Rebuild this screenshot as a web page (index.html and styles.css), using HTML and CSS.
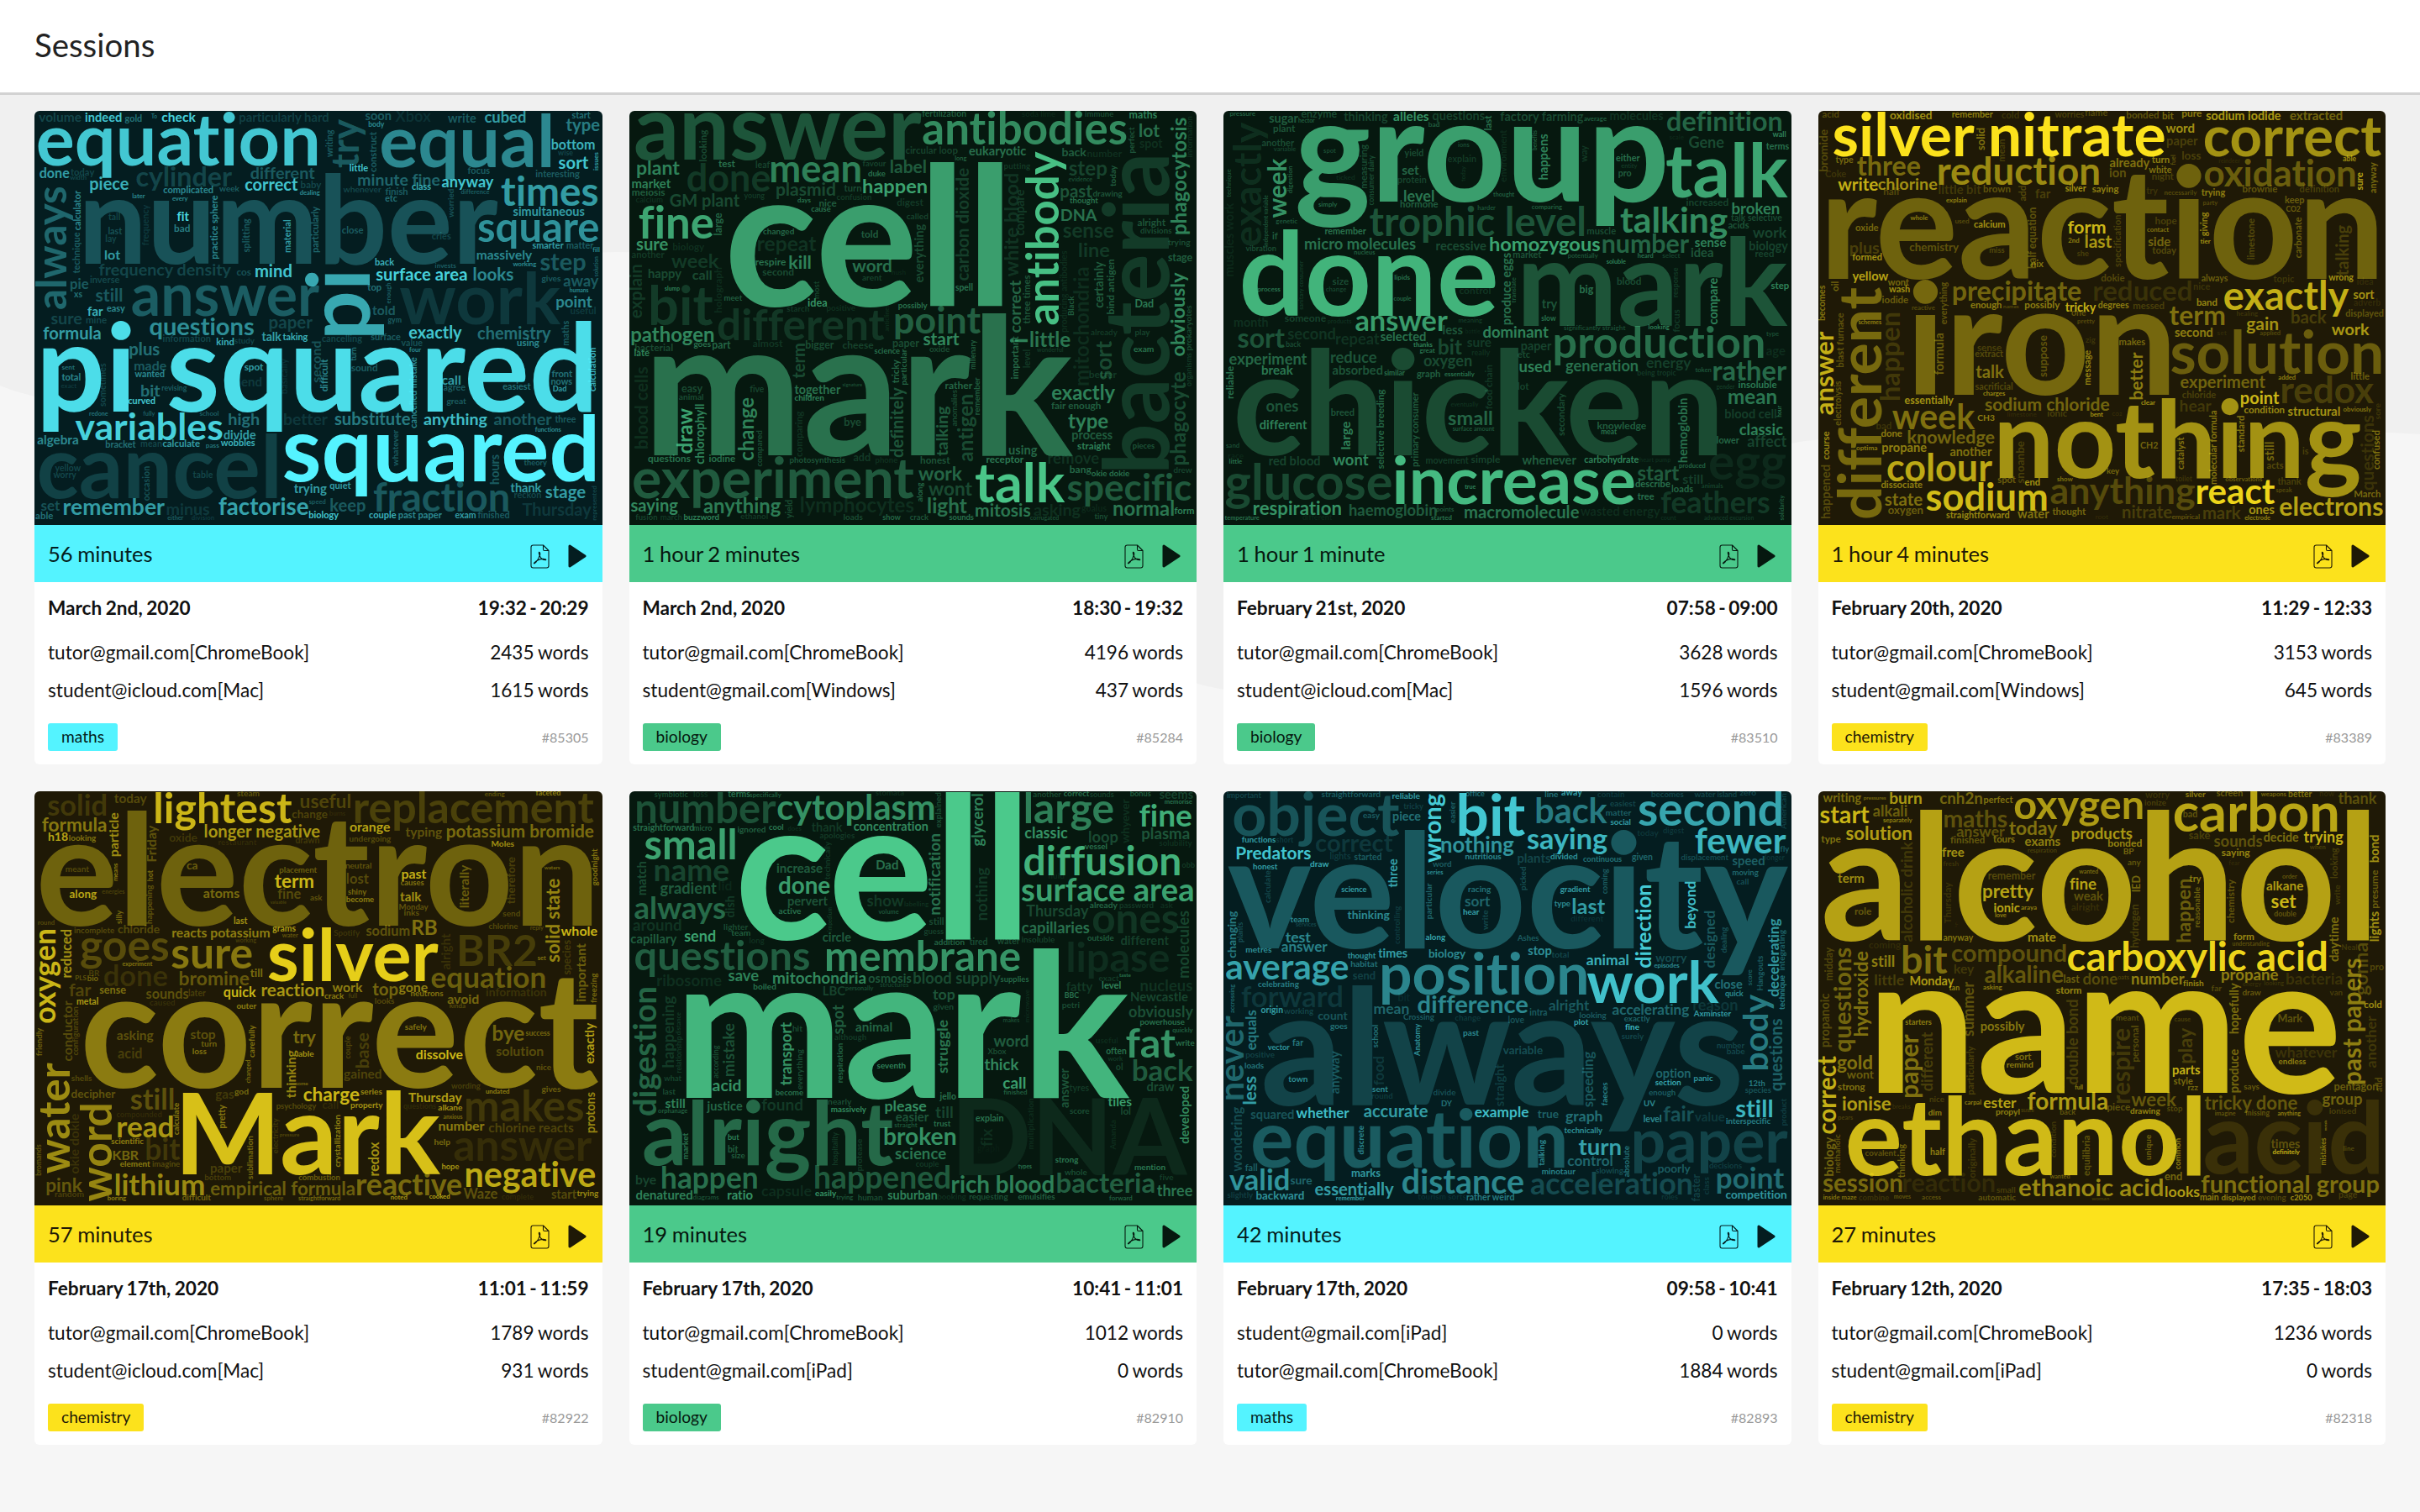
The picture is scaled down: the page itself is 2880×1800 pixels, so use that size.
FILE: index.html
```html
<!DOCTYPE html>
<html lang="en">
<head>
<meta charset="utf-8">
<title>Sessions</title>
<link rel="stylesheet" href="styles.css">
</head>
<body>
<svg width="0" height="0" class="defs" aria-hidden="true">
  <symbol id="pdf" viewBox="0 0 23 29">
    <path d="M3.5 1H15.5L22 7.5V25.5Q22 28 19.5 28H3.5Q1 28 1 25.5V3.5Q1 1 3.5 1ZM15.5 1V6Q15.5 7.5 17 7.5H22M10.6 9.2Q12.4 9.6 11.4 14Q13 18.6 18.6 18.8Q19.6 17.2 14.5 17.4Q8.5 18 4.4 22.4Q4.6 23.8 7 21.2Q10.4 16.6 11.2 13Q9.8 10 10.6 9.2Z" fill="none" stroke="currentColor" stroke-width="1.1" stroke-linejoin="round"/>
  </symbol>
  <symbol id="play" viewBox="0 0 22 28">
    <path d="M2 2L20 14L2 26Z" fill="currentColor" stroke="currentColor" stroke-width="3" stroke-linejoin="round"/>
  </symbol>
</svg>
<header class="topbar"><h1>Sessions</h1></header>
<main class="page">
  <svg class="wave" viewBox="0 0 2880 710" preserveAspectRatio="none" aria-hidden="true"><path d="M0 0H2880V404C2700 395 2480 380 2148 412C1960 440 1850 700 1600 716C1440 722 1380 690 1290 640C1040 460 1000 186 733 187C500 188 420 362 180 372C100 374 40 362 0 346Z"/></svg>
  <section class="grid">
    <article class="card maths">
      <svg class="cloud" data-cloud="85305"></svg>
      <div class="bar"><span>56 minutes</span><svg class="pdf"><use href="#pdf"/></svg><svg class="play"><use href="#play"/></svg></div>
      <div class="info">
        <div class="row when"><span>March 2nd, 2020</span><span>19:32 - 20:29</span></div>
        <div class="row"><span>tutor@gmail.com[ChromeBook]</span><span>2435 words</span></div>
        <div class="row"><span>student@icloud.com[Mac]</span><span>1615 words</span></div>
        <div class="row foot"><span class="tag">maths</span><span class="id">#85305</span></div>
      </div>
    </article>
    <article class="card biology">
      <svg class="cloud" data-cloud="85284"></svg>
      <div class="bar"><span>1 hour 2 minutes</span><svg class="pdf"><use href="#pdf"/></svg><svg class="play"><use href="#play"/></svg></div>
      <div class="info">
        <div class="row when"><span>March 2nd, 2020</span><span>18:30 - 19:32</span></div>
        <div class="row"><span>tutor@gmail.com[ChromeBook]</span><span>4196 words</span></div>
        <div class="row"><span>student@gmail.com[Windows]</span><span>437 words</span></div>
        <div class="row foot"><span class="tag">biology</span><span class="id">#85284</span></div>
      </div>
    </article>
    <article class="card biology">
      <svg class="cloud" data-cloud="83510"></svg>
      <div class="bar"><span>1 hour 1 minute</span><svg class="pdf"><use href="#pdf"/></svg><svg class="play"><use href="#play"/></svg></div>
      <div class="info">
        <div class="row when"><span>February 21st, 2020</span><span>07:58 - 09:00</span></div>
        <div class="row"><span>tutor@gmail.com[ChromeBook]</span><span>3628 words</span></div>
        <div class="row"><span>student@icloud.com[Mac]</span><span>1596 words</span></div>
        <div class="row foot"><span class="tag">biology</span><span class="id">#83510</span></div>
      </div>
    </article>
    <article class="card chemistry">
      <svg class="cloud" data-cloud="83389"></svg>
      <div class="bar"><span>1 hour 4 minutes</span><svg class="pdf"><use href="#pdf"/></svg><svg class="play"><use href="#play"/></svg></div>
      <div class="info">
        <div class="row when"><span>February 20th, 2020</span><span>11:29 - 12:33</span></div>
        <div class="row"><span>tutor@gmail.com[ChromeBook]</span><span>3153 words</span></div>
        <div class="row"><span>student@gmail.com[Windows]</span><span>645 words</span></div>
        <div class="row foot"><span class="tag">chemistry</span><span class="id">#83389</span></div>
      </div>
    </article>
    <article class="card chemistry">
      <svg class="cloud" data-cloud="82922"></svg>
      <div class="bar"><span>57 minutes</span><svg class="pdf"><use href="#pdf"/></svg><svg class="play"><use href="#play"/></svg></div>
      <div class="info">
        <div class="row when"><span>February 17th, 2020</span><span>11:01 - 11:59</span></div>
        <div class="row"><span>tutor@gmail.com[ChromeBook]</span><span>1789 words</span></div>
        <div class="row"><span>student@icloud.com[Mac]</span><span>931 words</span></div>
        <div class="row foot"><span class="tag">chemistry</span><span class="id">#82922</span></div>
      </div>
    </article>
    <article class="card biology">
      <svg class="cloud" data-cloud="82910"></svg>
      <div class="bar"><span>19 minutes</span><svg class="pdf"><use href="#pdf"/></svg><svg class="play"><use href="#play"/></svg></div>
      <div class="info">
        <div class="row when"><span>February 17th, 2020</span><span>10:41 - 11:01</span></div>
        <div class="row"><span>tutor@gmail.com[ChromeBook]</span><span>1012 words</span></div>
        <div class="row"><span>student@gmail.com[iPad]</span><span>0 words</span></div>
        <div class="row foot"><span class="tag">biology</span><span class="id">#82910</span></div>
      </div>
    </article>
    <article class="card maths">
      <svg class="cloud" data-cloud="82893"></svg>
      <div class="bar"><span>42 minutes</span><svg class="pdf"><use href="#pdf"/></svg><svg class="play"><use href="#play"/></svg></div>
      <div class="info">
        <div class="row when"><span>February 17th, 2020</span><span>09:58 - 10:41</span></div>
        <div class="row"><span>student@gmail.com[iPad]</span><span>0 words</span></div>
        <div class="row"><span>tutor@gmail.com[ChromeBook]</span><span>1884 words</span></div>
        <div class="row foot"><span class="tag">maths</span><span class="id">#82893</span></div>
      </div>
    </article>
    <article class="card chemistry">
      <svg class="cloud" data-cloud="82318"></svg>
      <div class="bar"><span>27 minutes</span><svg class="pdf"><use href="#pdf"/></svg><svg class="play"><use href="#play"/></svg></div>
      <div class="info">
        <div class="row when"><span>February 12th, 2020</span><span>17:35 - 18:03</span></div>
        <div class="row"><span>tutor@gmail.com[ChromeBook]</span><span>1236 words</span></div>
        <div class="row"><span>student@gmail.com[iPad]</span><span>0 words</span></div>
        <div class="row foot"><span class="tag">chemistry</span><span class="id">#82318</span></div>
      </div>
    </article>
  </section>
</main>
<script src="clouds.js"></script>
</body>
</html>
```
FILE: styles.css
```css
* { box-sizing: border-box; }
body { margin: 0; min-height: 1800px; background: #f6f6f6; color: #111; font-family: Lato, "Liberation Sans", sans-serif; font-size: 22.6px; font-variant-ligatures: none; }
.defs { position: absolute; }
.topbar { height: 113px; padding: 0 41px; display: flex; align-items: center; background: #fff; border-bottom: 3px solid #d2d2d2; }
.topbar h1 { margin: 0 0 4px; font-size: 38.4px; font-weight: 400; line-height: 46px; color: #222; }
.page { position: relative; padding: 19px 41px 80px; }
.wave { position: absolute; left: 0; top: 0; width: 100%; height: 710px; overflow: visible; }
.wave path { fill: #f0f0f0; }
.grid { position: relative; display: grid; grid-template-columns: repeat(4, 1fr); gap: 32px; }
.card { height: 778px; display: flex; flex-direction: column; border-radius: 6px; background: #fff; overflow: hidden; }
.maths { --tone: #54f3ff; --dark: #041d20; }
.biology { --tone: #4bc98b; --dark: #06180f; }
.chemistry { --tone: #fce21c; --dark: #1f1906; }
.cloud { display: block; flex: none; width: 100%; height: 493px; background: var(--dark); fill: var(--tone); font-family: Lato, "Liberation Sans", sans-serif; font-weight: 700; }
.bar { flex: none; height: 68px; padding: 0 19px 0 16px; display: flex; align-items: center; background: var(--tone); color: var(--dark); font-size: 25.6px; word-spacing: -1px; }
.bar span { flex: 1; }
.bar .pdf { width: 23px; height: 29px; margin: 6px 22px 0 0; }
.bar .play { width: 22px; height: 28px; margin-top: 6px; }
.info { padding: 0 16px; }
.row { height: 45px; display: flex; align-items: center; justify-content: space-between; word-spacing: -1px; }
.when { height: 61px; font-weight: 700; }
.when span:last-child { word-spacing: -2px; }
.foot { height: 67px; }
.tag { height: 33px; line-height: 32px; padding: 0 16px; border-radius: 3px; background: var(--tone); color: var(--dark); font-size: 19.2px; }
.id { font-size: 16px; color: #999; }
```
FILE: clouds.js
```javascript
// One word per line: text, start, end, baseline, strength (0-10).
// A leading ^ marks a word that reads upwards: text, bottom, top, baseline x, strength.
// GRID holds the horizontal and vertical units per pixel.
const GRID = { x: 2.2725, y: 3, top: 20 };
const CLOUDS = {
85305: { left: 12, words: `volume,24,138,60,2
indeed,150,247,60,8
gold,257,302,60,4
To,328,343,47,4
check,357,448,60,8.5
particularly hard,567,808,60,1.7
soon,907,976,52,3
Xbox,988,1084,60,1
write,1130,1206,62,3
cubed,1230,1340,62,6
start,1466,1516,47,4
body,916,958,78,5
equation,22,776,215,8
equal,950,1408,220,5
^try,222,50,888,3
^writing,185,88,818,3
^construct,238,95,936,3
type,1450,1540,93,4.5
bottom,1411,1527,157,7
wise,1428,1468,180,2
sort,1430,1510,228,8
^issues,232,168,1536,6
done,26,106,260,6
today,110,174,250,2
width,108,152,266,2
cylinder,288,546,290,2
different,597,770,263,3
little,865,914,237,8
focus,1184,1243,245,3
interesting,1368,1486,256,3
piece,163,266,302,7
complicated,361,495,315,5
week,512,566,307,3
correct,582,724,306,8
baby,733,788,296,2
dealing,730,784,319,5
whenever,847,950,311,2
minute fine,888,1108,288,3.5
class,1033,1084,301,7
finish,961,1021,321,3
etc,961,993,345,4
anyway,1114,1254,294,8
difference,1166,1242,318,3
times,1275,1535,358,6
simultaneous,1307,1499,394,6
later,277,311,331,5
every,385,427,340,5
^always,728,292,98,3.5
^calculator,446,305,137,5
^technique,600,454,134,3
number,150,1265,565,2.5
tall,212,243,410,2
last,212,249,461,2.5
lay,205,234,487,2
lot,203,244,552,6
^frequency,500,355,320,1.5
fit,398,430,414,9
bad,391,432,453,4.5
^practice sphere,548,322,508,5
^splitting,525,405,593,3
^material,525,410,705,6
^particularly,525,362,780,3.5
close,844,901,458,3
cries,1087,1138,480,2
^worried,400,300,1147,2.5
square,1212,1537,487,5.5
smarter,1359,1443,513,6
matter,1452,1524,513,3
massively,1209,1358,550,5
fill,1522,1540,523,5
step,1380,1502,590,3
frequency density,187,545,609,2
cos,559,597,608,2.5
mind,610,707,615,8
inverse,163,242,634,2
back,934,985,573,7
invests,1096,1152,581,3
working,1306,1369,576,5
surface area,936,1181,627,8.5
looks,1200,1307,625,5
gives,1384,1435,630,3
away,1443,1538,648,3
^solution,612,540,1536,3
answer,276,782,752,3
^pi,820,597,919,6.5
pie,110,158,656,3
xs,119,141,687,4
still,178,249,702,3
far,156,197,752,7
easy,208,257,736,5
sure,57,140,781,2
mine,152,207,778,2
top,913,950,663,4
^enough,708,635,976,3
told,926,986,750,3
gym,968,1004,775,3
work,1000,1435,783,1.3
point,1424,1520,722,5
useful,1462,1530,745,1.5
humans,1460,1510,667,5
formula,36,191,837,6
questions,324,605,820,5.5
information,360,488,845,2
paper,648,764,797,2
talk,627,680,842,6
taking,684,751,840,7
kind,505,551,857,7
study,553,607,850,2
cancelling,790,898,844,2
surface,922,1002,840,3
value,1004,1061,859,2.5
exactly,1025,1168,834,8
chemistry,1211,1409,835,4
using,1318,1377,860,5
^maths,857,770,1458,3
pi squared,36,1519,1095,9
plus,270,350,892,4
four,1026,1057,880,5
^calculation,1021,866,1531,7
^second,990,843,787,2.5
^difficult,1022,907,806,5
^turn,912,865,883,4
sound,869,939,950,3
made,283,368,946,3
wanted,284,363,972,5
sent,86,121,945,4
total,86,136,982,5
exact,84,126,1010,1.5
bit,301,352,1041,4
revising,357,424,1020,3
curved,266,338,1066,8
^sometimes,1075,922,205,2
spot,580,631,948,6
end,572,626,1003,1.5
^basically,1030,905,695,1
call,1114,1164,998,6
agree,1118,1177,1018,3
great,1127,1180,1066,3
^cancelled mistake,1152,900,1046,5
easiest,1279,1354,1015,4
front,1411,1467,972,4
nows,1410,1466,997,4
Dad,1415,1450,1023,6
variables,122,520,1196,8.5
high,538,619,1143,4
redone,161,211,1110,4
fully,306,338,1110,3
school,459,510,1110,3
better,687,805,1143,1.5
substitute,824,1028,1142,4.5
anything,1065,1236,1142,7.5
another,1255,1411,1143,3
three,1420,1476,1133,3
functions,1366,1436,1165,5
algebra,20,130,1212,5
bracket,205,286,1222,4
mean,300,356,1220,2
calculate,359,459,1221,6
pass,476,511,1223,4
divide,524,610,1194,6
wobbles,516,608,1218,7
squared,686,1528,1342,10
^whatever,1288,1160,997,3
cancel,25,668,1402,1.7
yellow,68,137,1308,2
worry,63,125,1332,2
^occasion,1412,1290,324,2.5
table,441,494,1332,2
theory,1336,1398,1285,3
^hours,1352,1248,1268,3
trying,714,802,1386,6
quiet,811,868,1370,6
thank,1300,1383,1382,6
reckon,1310,1382,1402,2
stage,1394,1502,1403,6
fraction,930,1293,1450,3
set,30,81,1448,2.5
remember,92,364,1464,6
minus,370,485,1462,1.5
factorise,511,752,1464,6.5
keep,813,907,1452,3
speed,755,799,1423,3
able,15,62,1478,4
either,372,415,1480,3
division,437,498,1480,1.5
biology,755,835,1474,8
couple,917,990,1474,7
past paper,997,1114,1474,5
exam,1150,1205,1474,6
finished,1211,1296,1474,3
Thursday,1332,1518,1466,1.5
^represented,1482,1360,1532,2` },
85284: { left: 16, words: `answer,32,806,193,3.5
^looking,200,88,226,3
fertilization,808,926,42,4
antibodies,810,1360,140,6.5
soda lime,1078,1168,42,1
immune,1249,1325,42,3
maths,1369,1443,46,6
lot,1396,1450,114,5
^phagocytosis,460,45,1522,6
^information,185,40,1538,1.5
^perfect,170,78,1382,3.5
spot,1396,1458,152,1.5
circular loop,763,904,173,2.5
eukaryotic,935,1089,180,5
back,1187,1252,181,4
number,1255,1348,185,1.5
long,897,928,198,4
^antibody,783,165,1177,9.5
^bacteria,1300,185,1474,2
plant,37,152,247,6
test,257,302,220,5
done,173,396,308,2
leaf,358,396,225,2.5
mean,400,640,274,6
favour,647,710,217,2.5
label,723,818,241,4
putting,1030,1100,226,2
^carbon dioxide,626,225,933,2.2
^white blood,612,245,1068,1.8
^compare,465,302,1084,2
step,1205,1307,252,2.5
^today,290,215,1332,4
evidence,1204,1268,272,3
market,24,128,296,6
duke,662,708,254,5
happen,649,820,315,8
plasmid,414,572,323,3
turn,597,643,308,3
meiosis,24,112,322,4
calcium,34,106,347,1.5
GM plant,126,314,362,3
young,326,382,332,2
confusion,577,670,339,2
days,471,506,346,5
nice,530,576,362,4
cause,508,560,379,5
digest,740,811,358,2
past,1183,1268,329,3.5
drawing,1270,1349,325,3.5
thought,1207,1284,350,5
DNA,1185,1281,414,5
sense,1189,1325,472,2
alright,1390,1466,431,3.5
divisions,1398,1482,457,3
trying,1473,1533,500,3
line,1233,1314,542,2
stage,1473,1538,557,4
cell,287,1026,717,7.6
fine,43,242,477,8
^large,463,385,266,4.5
changed,378,461,462,4.5
called,766,824,407,2.5
repeat,364,521,521,1.6
told,643,688,474,4
^everything,632,425,812,3
sure,35,120,518,7
biology,134,219,517,1.5
another,22,111,545,2
week,130,258,581,2
respire,358,439,572,5
kill,449,506,585,6
word,619,724,597,5
second,376,460,609,3
arent,646,699,625,2.5
hush,726,763,604,1
happy,68,157,616,3
call,187,238,624,3
^explain,760,570,50,2
^holograph,740,580,266,1.3
bit,75,242,786,2
slump,112,152,663,6
meet,273,321,699,4
idea,499,550,719,7
^most,690,628,530,2.5
spell,898,944,663,5
starch,442,502,738,2
positive,550,627,735,1.5
possibly,744,822,724,5
^correct,812,625,1075,4.5
^three times,780,607,1099,3.5
^producing antibodies,810,520,1200,1.3
^mitochondria,1000,580,1260,1.2
^Black,750,682,1219,4
^certainly,723,558,1297,4
^bind antigen,745,550,1327,4
Dad,1385,1433,723,5.5
^obviously,895,597,1518,6.5
^prokaryotes,875,715,1536,3
^sort,980,842,1321,3
^important,977,825,1067,4.5
^organisms,1003,885,1536,2
^level,937,873,1101,2
different,256,706,838,1.8
^anticlines,808,712,718,1.3
point,736,966,815,4.3
pathogen,22,244,846,6.5
start,811,908,858,6.5
^i,847,833,1093,6
little,1101,1208,863,5.5
already,1264,1336,820,2
play,1384,1424,822,2.5
exam,1380,1434,882,5
goes,190,236,862,5
part,241,290,870,4.5
bacterial,32,133,877,3
late,30,70,896,6
almost,350,431,864,1.8
bigger,493,569,868,3
cheese,593,676,868,2.5
paper,729,800,863,3
science,679,747,888,5
oxide,828,882,882,3
wonderful,1118,1189,882,2
^term,975,852,490,3
^particular,998,870,766,4.5
^tricky,992,908,745,4.5
^millenary,942,838,953,4
better,1260,1334,975,2
mark,83,1216,1250,5
together,463,587,1030,5
children,463,542,1055,6
signature,592,645,1003,3
rather,871,944,1013,4.5
easy,158,214,1024,3
five,342,380,1026,2.5
animal,150,216,1052,3
^remember,1105,972,964,4
^antigen,1272,1035,945,3
^blood cells,1225,935,66,1.5
^phagocyte,1283,953,1520,3
exactly,1159,1330,1051,6
fair enough,1157,1291,1084,4
type,1203,1310,1153,6
process,1214,1322,1193,4
straight,1228,1317,1229,6
^draw,1243,1083,187,8
^chlorophyll,1281,1068,219,6
^change,1268,1045,352,6
^comparing,1255,1093,483,1.7
^compared,1290,1162,376,3
bye,598,642,1145,3
^definitely,1257,1007,757,3.5
^talking,1252,1075,878,4
^anomalies,1146,1017,903,3
using,1043,1119,1248,4.5
pieces,1378,1436,1226,3.5
remove,1149,1285,1280,1.6
questions,67,181,1275,5
iodine,232,302,1273,5
photosynthesis,450,600,1276,3.5
add,622,667,1272,2
phone,682,741,1277,1.5
honest,804,883,1280,3.5
receptor,982,1082,1277,5.5
experiment,27,786,1402,3.8
work,798,916,1341,4.5
wont,825,943,1395,3
talk,952,1194,1418,9.8
bang,1208,1265,1313,4.5
okie dokie,1266,1368,1324,5
drew,1488,1538,1313,2.5
specific,1201,1536,1412,3.8
^along,1416,1348,810,4.5
saying,20,147,1450,6.5
anything,217,425,1456,5.8
^yield,1475,1410,456,3
lymphocytes,480,785,1455,1.4
light,824,929,1456,5
mitosis,953,1100,1470,5.5
asking,1110,1236,1466,1.5
goalus,1239,1306,1450,1
normal,1326,1488,1466,5.3
form,1490,1543,1459,6
fusion,33,91,1482,2.5
march,101,158,1482,2
buzzword,164,258,1482,6
ethanol,317,390,1478,2
loads,596,647,1482,3
show,701,750,1482,4.5
crack,775,825,1482,3.5
sounds,881,947,1482,5
tiny,1274,1310,1479,3
corrugated,1100,1177,1482,3` },
83510: { left: 14, words: `pressure,32,100,39,4
enzyme,225,320,43,3
sugar,138,216,62,4
hector,217,261,63,4
thinking,340,458,56,2.5
alleles,474,569,55,7
questions,580,720,54,2.5
factory farming,763,988,56,2.8
average,989,1050,55,4
molecules,1060,1203,52,1.7
definition,1214,1523,93,4.5
plant,150,208,95,3.5
bad,569,598,77,4
^last,88,36,738,5
^exactly,502,60,116,1.5
another,118,205,146,3
variable,150,210,163,2.5
group,214,1208,345,7.6
^measuring,296,140,403,3
^consumer dairy,357,178,420,3
^happens,265,103,892,6
^benefits,160,90,862,4
^environment,273,88,780,1.3
^way,203,143,998,2
wall,1499,1535,113,6
Gene,1273,1367,153,3
scale,1220,1259,121,1
terms,1482,1543,157,5
talk,1212,1540,328,8
^week,402,190,184,7
^digestion,314,218,200,4
yield,504,554,182,3
spot,285,318,170,3
ions,649,679,150,3
explain,621,697,204,2
^today,272,218,668,1.5
either,1076,1140,201,5
entity,1090,1133,224,2
set,497,543,248,4.5
pro,1083,1117,253,4
protein,486,562,279,2.5
level,503,583,343,5.5
hormone,493,594,365,4
thought,744,801,327,4
simply,271,322,363,4.5
^independent variable,505,320,134,3.5
^technique,328,228,34,3
^muscles work,610,348,42,1
ticked,319,369,265,1.5
comparing,848,930,370,4
harder,702,750,374,3.5
trophic level,410,990,466,3.5
increased,1266,1379,359,2.5
talking,1088,1377,454,6.8
broken,1390,1517,390,6
talk selective,1387,1524,414,3
acids,1379,1435,441,3.5
muscle,998,1075,461,3
work,1446,1537,473,2.5
genetic,156,214,421,3.5
remember,289,400,462,5
if,147,161,478,4
vibration,74,156,522,3
micro molecules,235,534,514,5
recessive,590,724,517,3
homozygous,735,1032,521,8
number,1040,1273,528,4.5
sense,1289,1373,505,6
biology,1437,1541,517,2.5
idea,1279,1338,543,3.5
reed,1453,1502,541,2.5
nucleus,368,424,532,4
market,798,874,546,3.5
potentially,946,1027,544,3.5
heard,1135,1176,544,5
select,1201,1249,546,2.5
soluble,1050,1102,565,6
done,65,750,753,8.8
^produce eggs,783,528,792,5
^translate,705,615,804,3.5
^sanitary consumer,730,555,229,2
process,107,168,664,5
size,309,352,640,3
change,291,346,664,2.5
lipids,477,518,623,5
couple,475,522,699,4.5
control,652,736,673,1.7
mark,826,1540,787,3.4
big,978,1014,671,5
blood,1079,1143,642,3
try,875,917,724,3.5
slow,874,913,771,5
^compare,782,618,1349,6
^response,685,580,1243,2
^focus,810,730,1248,2
step,1495,1543,655,6
someone,180,291,774,2.5
products,296,360,778,1.5
meaning,650,714,776,2
month,43,134,790,1.4
answer,371,620,806,7.5
less,608,661,818,3.5
significantly straight,935,1102,802,3
looking,1164,1220,800,6
sort,53,180,866,3.5
second,188,316,836,1.7
repeat,319,436,855,1.6
selected,439,561,841,5
thanks,528,579,864,6
back,184,223,864,3
dominant,716,893,831,6
sure,673,738,864,2
bit,597,659,891,3
great,545,586,884,5
bottle,668,708,815,1
really,686,735,892,1.5
paper,820,901,875,2.5
etc,810,843,901,3
production,911,1474,903,4.9
type,1482,1516,825,3
age,1482,1533,893,1.2
experiment,30,240,926,4.5
reduce,305,428,920,3.5
oxygen,556,685,932,3
used,815,899,953,6
generation,940,1135,949,5
energy,1158,1279,937,2.3
rather,1340,1537,982,4.8
^reliable,1047,932,42,5
break,118,202,962,5.5
absorbed,309,444,961,3.5
similar,449,505,965,5
graph,537,600,972,4
essentially,612,693,967,5
being tropic,1134,1238,966,2
token,1290,1333,954,3.5
gender,1347,1397,1013,2
insoluble,1407,1510,1011,5.5
lot,811,840,1016,2.5
mean,1381,1509,1068,5.5
chicken,50,1349,1250,2.9
^food chain,1085,928,741,2
^secondary,1180,1028,936,3
eventually,629,704,1076,1.5
ones,130,216,1093,3.5
breed,306,367,1108,3.5
different,112,240,1157,6
^large,1228,1130,356,6
^selective breeding,1298,1015,449,4.5
^primary consumer,1290,1025,541,4
small,622,740,1143,4.5
surface amount,634,747,1162,3.5
knowledge,1026,1157,1156,4
meat,1036,1078,1175,5
^hemoglobin,1275,1047,1268,5
blood cell,1371,1509,1117,2.2
^hour,1113,1073,1523,5
classic,1410,1527,1179,6
lower,1349,1409,1209,4.5
affect,1431,1537,1220,2.5
sand,21,57,1222,3
race,27,68,1262,1
little,30,64,1280,5
red blood,138,275,1285,2.5
wont,310,406,1286,6.5
movement,562,677,1280,2.2
simple,684,762,1278,2.5
whenever,822,968,1283,4
carbohydrate,990,1137,1278,6
heart pump,1140,1223,1273,1.4
produced,1247,1317,1296,4.5
egg,1329,1535,1338,1
glucose,20,468,1408,2.8
increase,478,1125,1425,9.2
true,667,696,1371,6
start,1134,1246,1341,4
still,1256,1310,1351,2.2
describe,1128,1222,1363,5
loads,1227,1284,1382,4.5
animals,1307,1365,1366,2.5
tree,1134,1178,1410,5
feathers,1198,1490,1458,2.1
respiration,96,332,1463,7
haemoglobin,355,590,1466,4
points,590,637,1450,3.5
started,576,631,1482,5
macromolecule,667,975,1475,5.3
wasted energy,980,1195,1466,1.2
different,228,308,1482,1
count,1197,1238,1482,1.5
advanced excursion,1314,1448,1482,2
temperature,18,111,1482,5
^solidarity,1482,1393,1530,4` },
83389: { left: 17, words: `acid,28,72,43,2.5
oxidised,211,323,51,6
remember,379,489,44,5
cold,513,559,48,1.5
worries,657,735,44,2
flame,738,799,39,2.5
bonded,851,937,47,3
bit,948,978,49,4
pure,1001,1053,42,5
sodium iodide,1066,1267,54,6.5
extracted,1293,1434,54,4
silver nitrate,58,956,182,10
^bromide,235,87,41,2.5
^solid,160,82,466,4.5
^mean,200,122,521,2
word,957,1033,98,6
paper,960,1043,143,2
correct,1062,1540,182,6
loss,1001,1051,194,2
type,64,111,207,4
three,122,292,250,4.2
^fuel,213,178,982,3
turn,919,966,205,5
already,805,913,221,4.5
white,911,972,241,4.5
ion,805,848,256,3
night,920,978,266,2
reindeer,1100,1157,205,1
able,1436,1471,201,6
oxidation,1062,1468,289,3.7
^sure,303,240,1489,7
^anyway,313,204,1525,4
Coke,36,92,256,1.5
write,70,178,305,7.5
chlorine,179,338,301,6
half,194,237,321,2.5
reduction,343,775,284,5.7
little bit,343,457,318,1.6
brown,464,536,310,3
^add,342,288,578,2.5
far,604,645,333,2
silver,685,741,307,6
saying,758,829,310,5
try,904,935,316,1.5
necessarily,953,1041,320,2.5
trying,1053,1117,324,5
brownie,1165,1258,311,3
definition,1319,1425,311,2
party,1058,1097,355,2.5
keep,1280,1331,350,3.5
CO2,1282,1320,381,3.5
explain,363,418,347,5
reaction,45,1528,620,3.6
whole,266,313,410,5
used,387,424,422,2.5
calcium,438,522,438,6
^half equation,582,365,606,3
oxide,118,179,450,4
plus,103,181,529,2
formed,109,188,555,6
chemistry,264,397,522,3
miss,480,520,528,2.5
form,692,793,459,8
2nd,693,722,490,5
last,739,811,508,6.5
^specification,577,392,835,2
she,717,748,540,2
hope,929,986,425,2
contact,906,965,453,4.5
side,909,969,502,4
today,920,985,530,2.5
^giving,467,382,1070,5.5
tier,1050,1078,494,6
^limestone,550,405,1197,2.5
^carbonate,545,400,1324,3.5
^talking,608,428,1450,2
yellow,109,206,626,7
^oil,663,630,71,4
wont,205,262,643,4
wash,208,264,668,6
nix,593,626,577,4.5
dokie,782,845,628,2.5
always,1053,1124,628,3.5
topic,1248,1304,633,1.6
wrong,1397,1464,626,6
idea,1474,1517,640,1
precipitate,382,727,697,4
reduced,763,1025,697,1.3
nice,1032,1076,660,1.5
exactly,1115,1452,732,7.5
sort,1464,1520,693,6
^everything,782,632,364,3
iodide,190,260,708,3.5
reactive,270,332,732,2.5
enough,429,512,724,5
names,518,559,725,2.5
possibly,576,670,724,5
tricky,685,768,737,7.5
degrees,774,856,726,5
messed,869,952,727,2
band,1041,1095,717,5.5
one,702,740,752,3
adverb,1465,1537,717,1
displayed,1443,1545,755,3
healing,1149,1206,752,1.5
back,1297,1391,780,2
term,967,1115,785,4.5
gain,1175,1260,802,6
second,981,1083,826,5
work,1405,1507,822,6.5
set,1096,1121,820,1
applied,1211,1266,822,2.5
pretty,718,765,779,2.5
schemes,125,187,782,5
^becomes,768,643,36,4.5
^answer,1105,808,57,7.5
^blast furnace,935,742,84,3
^electrolysis,1143,985,79,3
^different,1475,650,187,4
^happen,1052,742,238,1.6
iron,272,966,1035,3.9
^formula,963,815,355,3.5
sense,447,512,878,2
extract,441,517,900,2.5
talk,443,519,973,4.5
sacrificial,441,542,1016,2.5
charges,463,522,1037,5.5
^suppose,970,822,636,3
^message,998,875,753,5.5
^better,1050,883,893,5
makes,831,901,858,4
zig,740,766,848,1.5
solution,971,1538,958,3.4
experiment,997,1226,1010,3.8
added,1261,1307,979,5
little,1458,1507,980,3.5
chloride,1001,1092,1045,2
redox,1272,1519,1065,2.1
point,1160,1263,1068,8
condition,1169,1277,1100,5.5
hear,996,1080,1095,1.6
structural,1287,1427,1108,6
obviously,1437,1513,1093,4.5
essentially,251,383,1068,6
sodium chloride,468,804,1090,4
clear,890,928,1071,6
limestone,528,607,1112,1
ionic,637,690,1113,2
bent,753,787,1112,6
CO2,812,838,1108,1.2
CH3,448,493,1127,5
week,217,440,1158,4.4
bad,174,214,1158,1.5
done,187,243,1185,5
knowledge,260,493,1209,4
propane,190,309,1238,5
another,373,486,1254,4.5
optima,120,176,1233,5
colour,204,487,1342,7.2
nothing,507,1483,1330,6
^snoanbe,1350,1200,574,2
^catalyst,1300,1185,1006,4.5
^molecular formula,1353,1090,1095,4.8
^standard,1238,1110,1168,4.5
^still,1270,1203,1248,4
^questions,1375,1108,1518,1.5
^confused,1300,1162,1536,4.5
^sore,1122,1065,1538,1.5
^course,1265,1165,47,5.5
^happened,1475,1285,49,2.5
CH2,888,935,1227,3.8
key,798,831,1317,4
acts,1230,1274,1298,2.5
is,1327,1342,1246,2
spot,502,551,1349,3.5
end,576,616,1357,6
show,663,705,1344,4.5
toilet,983,1028,1342,1.5
observations,1118,1217,1343,3.5
thank,1259,1323,1356,2
dissociate,187,298,1367,5
state,197,298,1430,4.4
oxygen,206,299,1461,3.5
sodium,309,634,1447,8.3
anything,645,1035,1425,2.5
react,1042,1252,1425,9.5
speak,1255,1298,1383,2.5
March,1467,1537,1401,4
electrons,1265,1543,1466,7
straightforward,363,533,1475,5.5
water,556,641,1475,4.5
thought,650,740,1464,4
nitrate,840,973,1476,2
mark,1058,1159,1477,2
ones,1182,1250,1459,6
electrode,1170,1239,1482,5
empirical,973,1048,1478,3
root,767,801,1478,1` },
82922: { left: 12, words: `solid,48,205,107,1.7
today,228,316,61,2.5
lightest,340,709,135,7.8
steam,560,620,38,3
useful,732,866,81,2.3
change,709,804,117,2.2
burns,811,853,108,1
replacement,880,1525,135,2
ending,1230,1284,38,3
faceted,1368,1434,36,5
formula,33,206,163,4.8
h18,50,102,198,7
looking,106,178,196,4.5
^particle,252,97,239,5.8
longer negative,473,785,184,6.3
^Friday,270,142,342,3
orange,865,973,165,7
typing,1016,1114,182,3
potassium bromide,1128,1524,184,4.3
oxide,377,452,199,1.6
restaurant,510,613,212,1
drawn,718,782,206,1.7
undergoing,864,976,201,2.5
Moles,1249,1309,217,6
electron,28,1520,500,3.6
meant,97,160,307,2.5
ca,424,452,299,3.5
placement,675,776,310,3.5
neutral,854,923,296,3
past,1006,1072,332,7.5
causes,1003,1065,356,4.5
^means,340,278,238,5
term,662,766,365,8
lost,857,916,350,2.5
^literally,435,283,1186,3.5
^therefore,422,255,1312,2
^goodnight,357,225,1534,4.5
^solid state,630,333,1432,5.5
waters,1391,1433,299,4
along,107,180,402,7
energies,195,256,387,2
atoms,469,566,402,4.2
fine,670,732,404,2.5
ask,758,790,410,3
shiny,860,910,390,4
become,856,930,417,5
talk,1001,1058,414,6
Monday,999,1077,443,3
inks,1012,1052,465,3
send,1279,1325,467,2.5
valuable,650,693,421,2
^happening,492,355,330,3
^hot,340,302,333,4
^silly,493,445,248,4
last,552,588,493,6
round,22,66,496,2.5
incomplete,120,228,527,2.5
chloride,238,350,527,2.5
reacts potassium,385,648,542,5
grams,656,718,520,6.5
Spotify,822,892,535,1.5
sodium,909,1026,536,3
RB,1035,1100,532,4.6
chlorine,1241,1319,512,2.5
reply,1353,1389,515,2.5
whole,1436,1534,536,7.8
^oxygen,847,515,68,7.8
^reduced,685,515,112,6
water,682,725,542,3
working,556,612,560,2
goes,137,374,627,2.6
sure,383,600,654,4.7
silver,645,1104,697,9
^alright,657,528,1137,1.3
BR2,1162,1368,645,1.8
set,1373,1395,622,4.5
^species,675,552,1462,1.8
^important,770,563,1502,3.6
^freezing,775,670,1533,4
experiment,250,331,645,4.5
done,200,371,716,1.2
till,596,628,683,4.2
bromine,405,592,712,3.2
equation,1086,1392,722,3.7
far,106,165,752,2.3
sense,188,259,744,4.3
PLS,123,152,695,3
BR,160,188,680,2
bio,156,184,698,4
sounds,314,428,760,2.8
later,429,475,752,2
quick,524,611,754,7.8
reaction,627,794,752,6.3
work,818,899,738,5
crack,797,849,762,5
full,861,884,759,2
top,927,995,750,4
gone,998,1075,738,5
neutrons,1030,1117,752,4.5
avoid,1129,1213,778,4
information,1234,1396,753,1.4
metal,127,184,781,6.5
caused,324,392,784,1.3
outer,559,612,797,5
looks,933,985,780,2.5
kinda,1135,1177,793,2.5
correct,148,1538,1080,4.9
asking,235,334,908,2.8
stop,434,501,906,2.8
turn,463,504,931,3.8
acid,238,302,973,2
loss,440,477,960,4.5
try,712,773,920,4.3
able,726,767,969,6
safely,1014,1073,872,4.5
bye,1253,1336,910,4
success,1341,1406,892,4
solution,1261,1388,964,2.7
dissolve,1044,1170,977,8
nice,1370,1409,1015,3
^base,1007,883,916,2
^couple,975,895,866,2.3
^carefully,970,855,607,4.5
^changed,1062,980,596,4
^thinking,1115,945,718,5.5
^exactly,992,847,1526,6.8
^conductor,983,768,115,2.5
^configuration,963,790,130,2.3
^friendly,965,865,33,3.5
gained,849,950,1046,2.2
^water,1385,990,107,5.7
^protons,1238,1095,1527,5.4
shells,112,167,1054,2.5
decipher,112,231,1115,3
wording,1139,1218,1083,2
gives,1384,1435,1093,3.5
undated,1233,1296,1100,5
still,272,388,1158,2.8
gas,502,551,1119,1.7
god,553,590,1103,4
some,718,752,1071,4
charge,740,890,1126,8
series,894,952,1103,5.5
Thursday,1024,1168,1130,6.8
property,868,954,1150,6
psychology,667,774,1155,2.5
call,791,833,1155,1
questions,1010,1098,1155,1
alkane,1104,1169,1161,6
anxious,1118,1169,1190,4
Mark,414,1110,1388,8.3
^calculate,1247,1133,402,4.7
^pretty,1223,1140,527,4.8
^word,1485,1140,220,5.4
read,238,386,1256,6.5
scientific,220,307,1279,5
compounded,234,356,1183,1
makes,1180,1496,1200,1.5
number,1106,1229,1231,5
chlorine reacts,1241,1470,1237,2.2
^crystallization,1362,1177,838,5
^electricity,1313,1187,672,1.6
^sublimation,1405,1252,602,4
^redox,1393,1273,943,6
pressure,676,728,1253,2.3
KBR,225,294,1338,4
bit,315,406,1338,1.6
element,244,325,1362,5
imagine,331,405,1362,2.5
paper,489,574,1382,2
help,1094,1136,1283,4
answer,1147,1519,1340,1
hope,1114,1160,1370,6
^okie dokie,1385,1172,133,1.3
^bromands,1392,1282,31,3
negative,1180,1528,1434,7.4
pink,45,141,1452,3.2
random,68,145,1470,2
boring,210,260,1482,5
lithium,232,470,1462,5.8
bottom,473,543,1410,2
combustion,727,838,1410,3.6
empirical formula,489,878,1463,3.5
reactive,885,1167,1462,4.3
difficult,412,489,1481,4
sphere,633,685,1481,3
straightforward,726,839,1481,4
noted,976,1020,1478,6
cooked,1080,1135,1475,7
Waze,1172,1264,1476,2.8
complete,1276,1362,1477,1
start,1410,1478,1476,2.5
trying,1479,1537,1467,5.6` },
82910: { left: 16, words: `symbiotic,84,175,42,3
loss,190,228,42,1.5
terms,283,342,40,5
specifically,342,427,42,4
stomata,682,758,36,1.5
another,1108,1184,42,3
correct,1191,1260,38,5
sounds,1262,1326,40,2.5
bonus,1371,1426,38,4
seems,1450,1540,46,2.5
number,37,412,135,3.2
cytoplasm,417,840,122,7
^explained,150,25,858,3
^glycerol,215,30,972,6
large,1088,1324,135,5.8
fine,1396,1536,145,8.5
memorise,1464,1538,64,5
^whyever,205,48,1368,1.5
straightforward,26,190,160,5
micro,190,239,160,4
ignored,309,384,167,4
cool,394,432,158,5.5
thank,509,592,163,2
does,445,481,162,1.2
concentration,623,823,160,6.5
classic,1086,1201,187,7
loop,1259,1337,204,3
plasma,1403,1530,190,3.6
vessel,1248,1308,226,5
solubility,1449,1538,215,1.5
small,58,302,264,7.8
apologies,531,625,187,2
diffusion,1084,1504,319,8.8
cell,316,1073,548,10
^technically,335,200,560,2
^notification,460,173,856,5
Dad,685,742,298,5
obb,1511,1545,294,2
^match,390,272,62,3
name,86,284,342,2.7
increase,415,538,312,4
gradient,100,252,387,4
lid,258,292,375,1
fluid,1148,1192,333,1.3
done,420,558,387,7.5
pervert,445,552,428,3.5
show,659,758,432,2
labelling,760,825,430,1.5
active,420,480,457,5
volume,690,744,457,3.5
surface area,1077,1540,413,8
always,30,275,475,4.8
^dish,470,395,300,2
Thursday,1090,1258,468,2.8
already,1261,1336,437,4.5
password,1342,1433,437,2
ask,1453,1486,437,1.5
ones,1270,1500,528,1.7
^molecules,685,447,1529,2.7
^nothing,480,292,984,2
^impedium,520,435,563,2
around,26,156,517,1.8
lighter,272,337,516,3
team,292,343,535,4
capillary,20,144,562,4
send,165,248,556,8
long,341,381,562,1.5
circle,539,615,557,4
still,827,866,497,3
guess,813,866,531,2.4
capillaries,1078,1260,528,5
outside,1255,1326,554,4
different,1345,1475,568,2.3
addition,841,922,568,4.3
tired,936,984,568,3
water,1011,1072,565,3
insoluble,1077,1166,560,2.3
questions,32,502,660,4
membrane,550,1072,661,7
lipase,1203,1475,665,1.2
ribosome,92,265,716,1.4
save,284,365,698,6
mitochondria,405,655,706,6.5
osmosis,663,778,703,3.5
blood supply,785,1020,706,3
supplies,1020,1096,702,4.5
exact,1286,1340,698,2
taste,1341,1372,682,5
boiled,352,412,728,5
LBC,541,600,750,2.5
personally,601,676,730,3
structures,694,771,718,2.5
fatty,1198,1269,734,2
level,1295,1345,725,6
nucleus,1399,1538,733,1.6
^digestion,1178,722,89,4.6
^happening,1005,752,136,2
^distance,890,810,154,2
^relationship,1025,895,157,2
top,837,896,763,3.7
given,838,892,801,3
BBC,1194,1232,758,5
petri,1187,1233,793,3
Newcastle,1373,1526,770,2.7
obviously,1367,1541,828,3.2
powerhouse,1398,1517,853,5
mark,170,1369,1114,8.9
^spot,887,783,596,4
^mistake,1037,850,301,3.3
^transport,1070,845,454,7
^according,1045,928,256,3
^everything,1085,942,483,3
^respiration,1060,920,592,4.4
hit,458,484,877,3
animal,628,726,878,4.4
although,571,656,907,2
seventh,686,763,1009,6
^struggle,1027,837,878,5.4
makes,1027,1071,844,3
^microwave,845,728,1097,1.2
word,1001,1094,933,4
Xbox,985,1035,959,3
thick,977,1069,1017,6.5
call,1027,1087,1082,7.5
finished,1028,1091,1102,4
useful,1278,1337,920,1.2
often,1306,1360,960,5
work,1310,1350,983,2
ol,1332,1350,1016,2.5
fat,1360,1493,970,7
quickly,1485,1540,880,4
write,1493,1544,930,5
back,1379,1540,1054,4
draw,1416,1490,1090,3
^answer,1150,1010,1204,3.5
tyres,1206,1259,1091,2
^developed,1278,1075,1529,6.5
what,110,157,1054,2.5
last,107,141,1102,3
acid,241,317,1090,7
become,412,486,1106,5
jello,855,899,1121,5
tiles,1311,1374,1145,7.5
still,113,166,1150,6
orphanage,94,173,1170,4
justice,225,321,1159,4.6
found,374,484,1161,2
nearly,554,617,1139,3
massively,562,657,1166,6.5
please,708,819,1162,6.7
till,844,890,1186,2.5
easier,737,826,1198,3.5
straight,733,795,1219,3.5
trust,839,885,1217,5
explain,953,1027,1200,5
score,1207,1260,1173,3
lol,1346,1371,1175,3
alright,55,730,1356,4.6
^market,1333,1240,175,5
^hospitality,1355,1238,579,2
^protease,1375,1262,645,2
but,283,313,1266,6
bit,283,310,1310,4
size,292,328,1332,4
broken,706,898,1284,7
science,735,872,1335,5.3
couple,791,853,1360,2
DNA,908,1525,1392,1
^fix,1288,1225,998,1.3
^multiplication,1297,1117,1110,1.3
^Amanda,1300,1195,1332,1.3
graph,957,1017,1308,.5
strong,1168,1230,1347,5.5
types,1068,1104,1368,5
whole,1193,1253,1390,3
mention,1383,1465,1373,5.5
bye,34,88,1423,2.6
happen,105,361,1440,5.2
capsule,374,508,1466,1.3
happened,519,882,1440,4
rich blood,889,1163,1454,6
bacteria,1174,1435,1454,4.2
five,1450,1487,1410,2.2
three,1443,1538,1467,5.3
denatured,34,186,1478,6
diagrams,188,258,1479,3
ratio,282,349,1479,7
easily,519,576,1466,7
trying,576,621,1477,3.5
human,635,700,1480,3
suburban,715,848,1478,6
booking,850,927,1477,1.5
requesting,936,1040,1478,3.3
emulsifies,1068,1167,1477,4.2
forward,1314,1376,1481,4` },
82893: { left: 14, words: `important,24,116,45,2
straightforward,279,438,42,3
reliable,471,545,48,6
object,42,490,178,2.6
^wrong,275,30,602,8.4
^easier,133,57,641,3
office,669,720,37,4
bit,652,830,178,8
line,884,919,42,4
away,928,984,34,6
contain,1026,1098,42,1.5
becomes,1172,1258,42,2
water,1288,1345,40,2
island,1350,1402,40,2
zero,1411,1454,36,2
tricky,501,555,82,1.7
easy,392,437,117,3
piece,473,547,125,4
back,861,1052,135,4.5
easiest,1060,1129,73,2
matter,1049,1117,108,3.3
social,1061,1115,140,6
second,1137,1523,144,6.4
^American,155,28,1536,1.7
functions,64,155,203,6
short,157,203,204,1.5
nothing,604,799,238,5.6
saying,836,1052,227,7.4
today,1133,1191,180,1.3
digest,1203,1260,170,1.3
fewer,1290,1535,243,7.4
fly,1520,1544,236,3
correct,264,472,237,1.3
Predators,50,250,264,8
lights,303,358,263,1.5
started,368,441,265,3
nutritious,669,765,264,5
plants,810,898,276,2
divided,899,971,264,5.6
continuous,987,1091,272,4
given,1119,1174,267,3.5
displacement,1252,1380,267,2.3
speed,1391,1477,284,3.3
longer,1479,1532,265,1.3
honest,95,160,298,6
draw,249,299,291,6.6
^three,363,262,485,6.3
word,580,630,291,3
series,565,608,318,5
^particular,475,348,578,3.5
^picked,372,290,833,2.4
^coming,386,297,1052,3
moving,1391,1461,319,3.5
call,1402,1434,354,2.4
^calculate,418,303,141,2
velocity,25,1542,580,2.8
science,333,401,379,6
racing,677,737,381,4
gradient,925,1006,379,6
sort,667,735,432,3.4
type,909,952,431,5
last,959,1046,457,6
hear,663,706,460,6.3
thinking,350,463,477,5
different,954,1042,484,1
^write,515,445,729,2
^controlling,565,430,490,1.5
^direction,650,355,1171,8.3
^beyond,508,343,1291,7.5
^designed,650,448,1343,2.8
^dealing,597,505,1374,2.5
^changing,615,448,48,4.5
^plants,558,488,66,2.4
^decelerating,753,475,1517,5.8
^integrating,660,515,1532,3.3
team,195,245,489,5
services,210,265,503,2
test,182,250,559,5
answer,171,295,593,4.7
along,561,614,552,6.5
Ashes,809,867,555,3
metres,75,144,595,5.4
thought,350,426,617,5.6
times,433,511,614,6.2
biology,570,669,614,5.2
stop,838,901,606,5.5
total,902,948,614,2
worry,1183,1267,629,2.2
episodes,1179,1247,651,5
habitat,359,431,646,4
average,21,351,693,6.4
send,364,424,692,1.8
position,444,995,745,4.9
animal,996,1109,642,7
work,997,1354,776,7.7
close,1343,1417,725,4
quick,1371,1420,752,5
^score,713,657,1443,3
^Hangouts,730,608,1473,3
^body,1013,745,1486,4.6
^technique,800,678,1533,4.5
celebrating,108,218,719,4.6
^accrossing,812,710,44,3.5
forward,63,334,792,1.3
difference,540,837,813,5
alright,894,1003,803,2.8
accelerating,1066,1273,818,3.7
reason,1285,1404,803,1.3
mean,422,515,815,3.4
bit,487,519,770,.8
origin,116,174,811,6
working,178,257,815,2
count,270,350,836,2.7
Axminster,1286,1387,825,6
exactly,1098,1168,841,3.3
looking,978,1049,829,3
intra,843,889,822,3
love,785,827,849,2.5
plot,963,1001,853,6.5
fine,1101,1138,872,7.4
Crossing,501,584,837,3
change,641,709,840,1.4
goes,303,349,870,4
past,663,705,892,5
^equals,943,802,103,4.6
^never,1120,822,68,3.7
^school,935,855,432,4
^Anatomy,965,850,546,5.5
always,123,1410,1140,1.8
vector,134,193,943,5.6
far,201,230,928,4.4
positive,75,152,972,1.8
loads,72,123,1010,4
variable,770,877,960,2.4
surely,1091,1151,904,2
number,1349,1423,937,2
babe,1376,1424,958,2
^questions,1090,833,1524,3.2
^less,1137,1038,103,6
^anyway,1100,948,327,2.8
^food,1070,968,448,1.5
^straight,1145,995,774,1.6
^speeding,1148,950,1014,2.8
^faeces,1142,1060,1053,4.7
town,190,241,1058,5.3
sent,417,459,1093,5.2
round,416,471,1117,1.5
divide,582,642,1107,2.4
DY,604,632,1145,4
option,1184,1277,1043,3.4
section,1182,1251,1070,6.5
panic,1287,1338,1055,5.6
12th,1436,1478,1074,4.4
species,1425,1495,1098,2.5
enough,1165,1236,1107,3
UV,1152,1182,1145,5
^wondering,1378,1148,64,2.4
squared,88,204,1190,2.7
whether,211,354,1186,7.6
accurate,394,566,1183,6
example,694,839,1184,7.5
true,864,920,1186,3.3
graph,940,1038,1200,4
fair,1204,1286,1200,2.6
value,1289,1369,1199,1.5
level,1151,1198,1203,5
still,1400,1498,1183,7.3
interspecific,1374,1494,1208,4.6
^product,1213,1118,1536,1.6
technically,936,1039,1241,5.4
equation,93,936,1364,2.9
^discrete,1317,1215,393,5
^talking,1357,1265,883,5
turn,975,1088,1318,6.3
control,945,1066,1359,3.4
paper,1125,1540,1345,1.8
^absolute,1397,1287,1112,4
poorly,1190,1277,1382,3
decisions,1328,1416,1366,1.7
fall,73,105,1376,3.2
marks,361,438,1398,5.8
minotaur,876,966,1387,4.8
slowing,1021,1095,1385,2.2
valid,30,190,1444,5.6
sure,195,253,1423,3.4
essentially,262,475,1462,6.2
distance,498,825,1457,5
acceleration,845,1280,1460,2.2
point,1350,1530,1439,3.8
^faster,1485,1387,1303,1.8
^class,1460,1398,1328,1.5
slightly,25,94,1472,1.7
backward,103,231,1478,5.5
remember,319,396,1481,6
tourism sorts,540,670,1479,1
rather weird,672,801,1481,4.4
roles,1200,1243,1478,1.3
competition,1373,1537,1476,5.7` },
82318: { left: 17, words: `writing,30,133,60,4.2
pressures,140,200,50,4
burn,211,296,65,6.5
cnh2n,346,460,66,4
perfect,465,543,61,4.6
oxygen,548,893,118,6.5
worry,901,967,43,1.4
silver,1010,1064,42,5
screen,1094,1164,39,3.5
weapons,1214,1282,38,4
better,1289,1352,42,4.6
now,1373,1413,39,1
thank,1423,1527,66,2.8
start,22,155,135,8
alkali,165,257,109,3.6
separately,192,271,132,5
maths,358,527,150,3
ionize,900,957,71,2
carbon,980,1420,163,7
bad,1004,1041,112,3
answer,391,521,181,3
today,533,663,176,4.6
type,25,77,203,4.5
solution,92,269,195,6.7
finished,374,466,206,3.3
tours,490,548,203,4.5
exams,576,671,214,5.2
products,703,866,191,6.5
bonded,801,891,219,5.4
BP,843,870,246,4
respiration,584,661,240,2
sake,1019,1076,192,2
sounds,1087,1217,219,3
decide,1222,1315,201,4.3
trying,1330,1436,204,7.7
^bond,273,177,1533,6
^alcoholic drink,557,200,271,1.6
free,352,411,253,6
saying,1108,1184,251,5.4
when,1346,1388,227,2
fresh,355,396,287,1.5
any,854,889,283,3
fear,1127,1157,283,1
alcohol,32,1508,550,6.8
term,70,140,347,5.7
remember,477,604,334,2.5
fine,697,768,370,7
wanted,722,773,314,4
try,1021,1052,343,5
order,1272,1312,332,3
alkane,1229,1328,374,6.6
pretty,463,599,402,7
weak,708,787,411,3
set,1242,1309,437,7.8
^IED,378,322,887,4
^happen,558,335,1023,3.5
^reasonable,505,362,1049,3.5
^chemistry,490,335,1142,3
^looking,330,222,1421,2
^write,425,355,1427,1.7
^presume,437,302,1531,3.5
^lights,555,450,1533,6
^Thursday,492,345,376,1.4
role,116,160,460,3.3
ionic,492,562,452,7
araya,565,607,444,5
love,495,525,469,5
alright,701,777,447,1.2
double,1250,1309,466,3
^high,505,487,392,1
anyway,355,436,553,4.6
mate,585,659,558,6
^hydrogen,577,425,882,2
form,1140,1195,552,5.5
understanding,1137,1237,571,2.8
^daytime,628,470,1423,4.3
^midday,695,577,55,2.4
^questions,950,580,106,4
^hydroxide,893,592,151,4.5
coming,154,240,581,1
still,161,222,648,5
bit,246,366,670,4.4
compound,378,686,628,3
carboxylic acid,692,1390,661,9.4
Neal,1433,1474,587,1.7
^gonna,748,563,1504,2.5
key,385,438,672,1.7
alkaline,467,679,704,3.2
last,681,723,703,3.6
done,733,825,709,2.6
oats,827,857,693,2
number,865,1007,709,5.2
finish,1004,1058,716,5.5
propane,1108,1260,695,5.2
bacteria,1283,1433,710,1.4
pro,1510,1546,658,2.5
little,170,248,713,2
Monday,266,384,712,6.5
tan,371,398,731,5
asking,463,514,728,5
storm,660,728,742,5.5
draw,1164,1214,750,3.2
far,1080,1108,735,2.5
energy,1165,1215,717,1.2
looking,1223,1276,714,1.5
van,1400,1434,749,2
^propanoic,932,742,46,2.5
^summer,895,700,438,3
^hopefully,885,705,1153,4.3
^past papers,1065,618,1486,5
^another,1007,822,1526,1.6
cold,1493,1540,794,5.7
name,180,1418,1098,8
starters,252,323,854,5
possibly,457,575,874,4.7
meant,823,884,838,2.6
cause,980,1024,843,2
Mark,1261,1326,845,3
^double bond,1067,765,720,2
^paper,1112,888,288,4.4
^different,1090,880,327,2
^particularly,1103,930,438,2
^personal,985,858,883,2.6
^respire,1133,868,860,1.8
^play,990,865,1029,2
whatever,1252,1420,970,1.4
endless,1262,1335,994,5
sort,549,593,980,4.3
remind,527,597,1006,5
gold,68,162,1014,4.6
wont,94,167,1047,3.5
strong,70,143,1087,4.5
parts,976,1049,1032,7.7
style,978,1029,1066,4.2
full,711,732,1085,5
rzz,1017,1043,1087,4
says,1168,1209,1086,3.3
pentagon,1413,1530,1087,3.4
^add,1093,1043,1541,2.5
^produce,1095,942,1153,4
^correct,1243,965,64,7.5
ionise,83,213,1161,6.8
nice,318,357,1130,2
dim,315,350,1177,5
breaks,218,266,1155,1.2
carpal,413,457,1139,5
ester,464,552,1150,7
formula,583,798,1158,6.6
piece,799,860,1160,3
week,864,985,1145,3.3
propyl,498,561,1175,5
sushi,565,600,1166,2
back,671,713,1176,3
drawing,861,941,1171,5.5
stop,960,1001,1164,2.6
tricky done,1062,1313,1157,3.3
imagine,1090,1145,1178,3
missing,1174,1237,1178,3
anything,1259,1321,1178,5
group,1380,1487,1140,3.8
ionised,1399,1471,1171,2
^biology,1393,1255,57,3.8
^methanoic,1382,1245,76,3
pears,71,110,1192,2
ethanol,97,1051,1392,8
covalent,144,228,1323,3
^thinking,1400,1280,252,3.8
half,321,360,1320,5
^originally,1400,1258,441,1.6
^condition,1327,1200,661,1.6
^equilibria,1393,1250,752,3
^unique,1335,1247,917,3.5
^common,1370,1260,996,5
acid,1062,1533,1384,1.2
times,1241,1319,1294,3
definitely,1246,1319,1315,7.5
^metals,1232,1195,1391,5
^mistakes,1355,1258,1389,5
line,1438,1466,1303,2.5
end,954,1000,1408,4
session,30,243,1452,4.2
reaction,247,493,1452,1
wanted,643,697,1403,3.6
ethanoic acid,560,948,1466,5.7
looks,956,1048,1468,6.6
functional group,1053,1533,1453,4.4
inside maze,30,120,1477,4.5
combine,127,208,1480,1.5
moves,222,267,1474,3
access,297,348,1477,3
small,499,549,1454,2
automatic,450,551,1481,3
woman,756,803,1481,2
main,1050,1099,1480,5
displayed,1107,1199,1480,5.2
evening,1206,1282,1480,2.4
c2050,1294,1352,1480,6
page,1425,1474,1473,2` }
};

const pen = document.createElement('canvas').getContext('2d');
pen.font = '700 200px Lato, "Liberation Sans", sans-serif';
pen.letterSpacing = '0.01px'; // any letter spacing switches ligatures off, as in the stylesheet

document.querySelectorAll('.cloud').forEach(svg => {
  const { left, words } = CLOUDS[svg.dataset.cloud];
  const px = v => (v - left) / GRID.x;
  const py = v => (v - GRID.top) / GRID.y;
  words.split('\n').forEach(line => {
    let [word, from, to, base, strength] = line.split(',');
    const up = word[0] === '^';
    if (up) word = word.slice(1);
    const m = pen.measureText(word);
    const ink = (m.actualBoundingBoxRight + m.actualBoundingBoxLeft) / 200;
    const length = up ? (from - to) / GRID.y : (to - from) / GRID.x;
    const size = length / ink;
    const bearing = -m.actualBoundingBoxLeft / 200 * size;
    const t = document.createElementNS('http://www.w3.org/2000/svg', 'text');
    t.textContent = word;
    t.setAttribute('font-size', size.toFixed(2));
    t.setAttribute('fill-opacity', strength / 10);
    const x = up ? px(+base) : px(+from) - bearing;
    const y = up ? py(+from) + bearing : py(+base);
    t.setAttribute('transform', `translate(${x.toFixed(1)} ${y.toFixed(1)})${up ? ' rotate(-90)' : ''}`);
    svg.appendChild(t);
  });
});
```
